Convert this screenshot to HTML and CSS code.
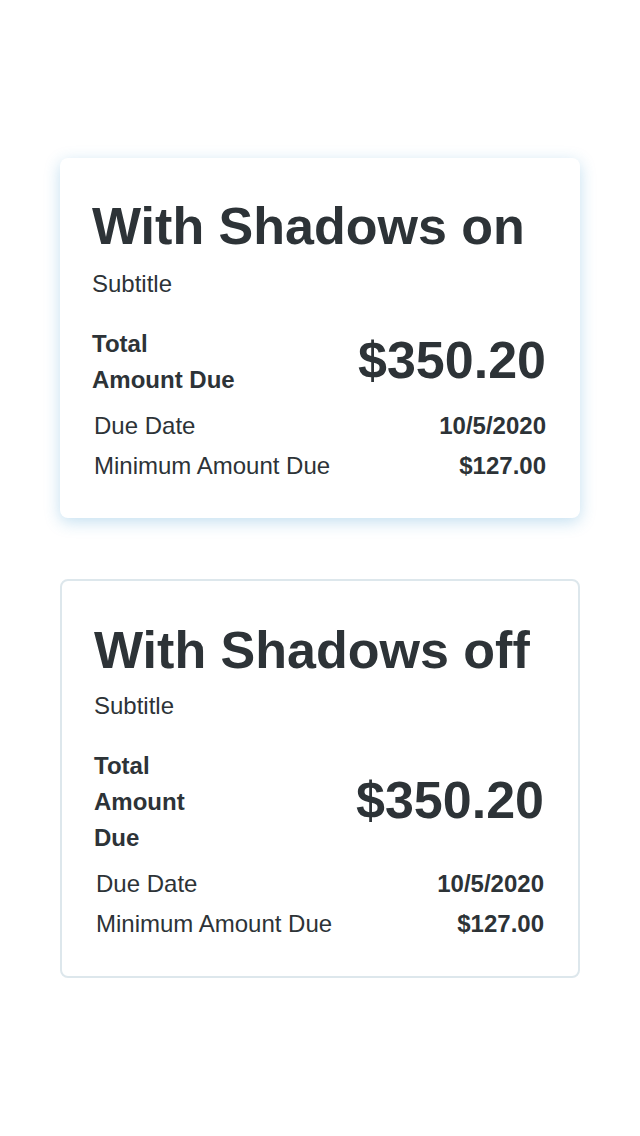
FILE: index.html
```html
<!DOCTYPE html>
<html lang="en">
<head>
<meta charset="utf-8">
<title>Cards</title>
<link rel="stylesheet" href="styles.css">
</head>
<body>
<main class="page">
  <section class="card card--shadow">
    <h1 class="card__title">With Shadows on</h1>
    <p class="card__subtitle">Subtitle</p>
    <div class="total">
      <div class="total__label">Total Amount Due</div>
      <div class="total__value">$350.20</div>
    </div>
    <div class="row"><span class="row__label">Due Date</span><span class="row__value">10/5/2020</span></div>
    <div class="row"><span class="row__label">Minimum Amount Due</span><span class="row__value">$127.00</span></div>
  </section>
  <section class="card card--flat">
    <h1 class="card__title">With Shadows off</h1>
    <p class="card__subtitle">Subtitle</p>
    <div class="total">
      <div class="total__label">Total Amount Due</div>
      <div class="total__value">$350.20</div>
    </div>
    <div class="row"><span class="row__label">Due Date</span><span class="row__value">10/5/2020</span></div>
    <div class="row"><span class="row__label">Minimum Amount Due</span><span class="row__value">$127.00</span></div>
  </section>
</main>
</body>
</html>
```
FILE: styles.css
```css
* { box-sizing: border-box; }
html, body { margin: 0; padding: 0; background: #ffffff; }
body {
  font-family: "Liberation Sans", Arial, sans-serif;
  color: #2d3337;
}
.page {
  display: flex;
  flex-direction: column;
  gap: 61px;
  padding: 158px 60px 0 60px;
}
.card {
  width: 520px;
  background: #ffffff;
  border-radius: 8px;
  padding: 38px 32px 32px 32px;
}
.card--shadow {
  box-shadow: 0 4px 16px rgba(40, 140, 200, 0.28);
}
.card--flat {
  border: 2px solid #dde7ec;
  padding-top: 39px;
}
.card__title {
  margin: 0;
  font-size: 52px;
  line-height: 60px;
  font-weight: 700;
}
.card__subtitle {
  margin: 0;
  margin-top: 13px;
  font-size: 24px;
  line-height: 30px;
}
.card--flat .card__subtitle { margin-top: 11px; }
.total {
  display: flex;
  align-items: center;
  justify-content: space-between;
  margin-top: 27px;
}
.total__label {
  font-size: 24px;
  line-height: 36px;
  font-weight: 700;
  width: 148px;
}
.card--flat .total__label { width: 110px; }
.total__value {
  font-size: 52px;
  line-height: 60px;
  font-weight: 700;
  margin-right: 2px;
  margin-bottom: 4px;
}
.row {
  display: flex;
  justify-content: space-between;
  padding: 0 2px;
  font-size: 24px;
  line-height: 40px;
}
.total + .row { margin-top: 8px; }
.row__value { font-weight: 700; }
```
